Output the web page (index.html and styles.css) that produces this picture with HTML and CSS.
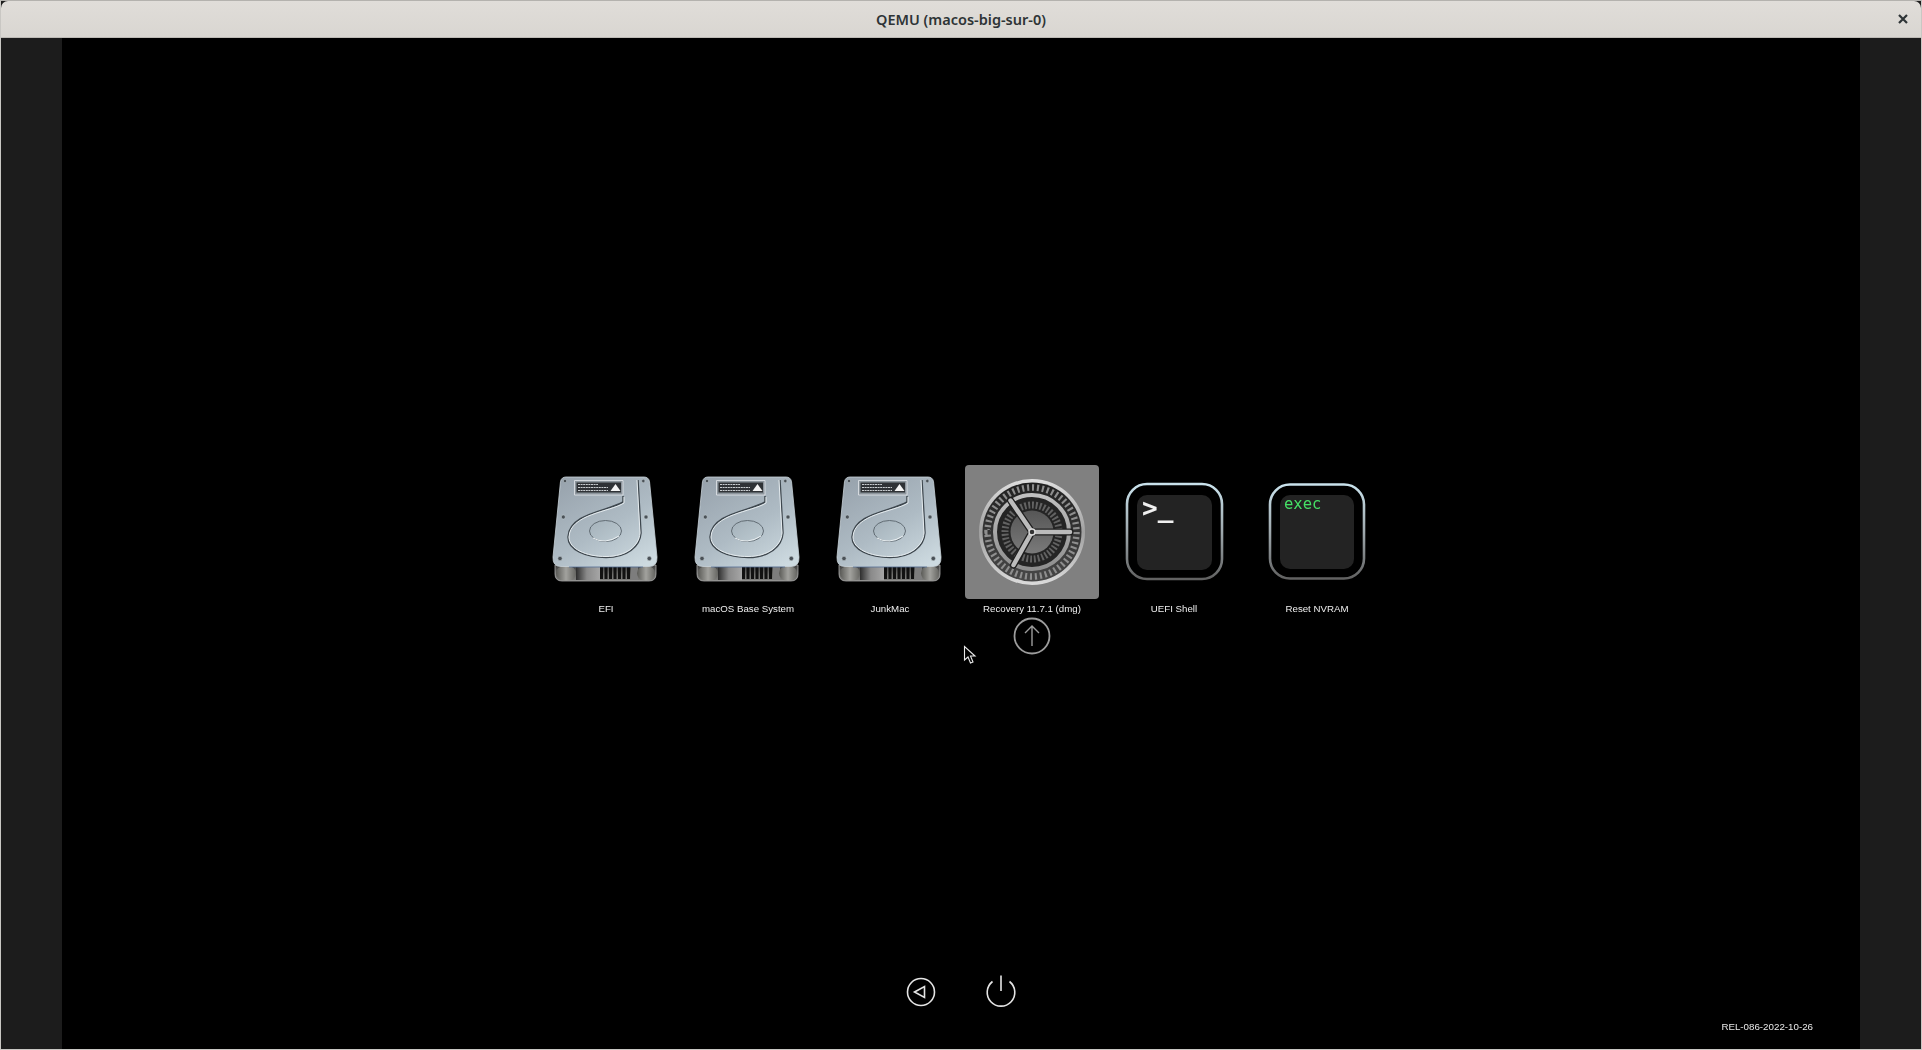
FILE: index.html
```html
<!DOCTYPE html>
<html lang="en">
<head>
<meta charset="utf-8">
<title>QEMU (macos-big-sur-0)</title>
<link rel="stylesheet" href="styles.css">
</head>
<body>
<div class="window">
  <header class="titlebar">
    <span class="title">QEMU (macos-big-sur-0)</span>
    <svg class="close" width="12" height="12" viewBox="0 0 12 12"><path d="M2 2 10 10M10 2 2 10"/></svg>
  </header>
  <div class="screen">
    <div class="side"></div>
    <main class="boot">
      <div class="row">
        <div class="item">
          <div class="tile">
            <svg class="icon" width="134" height="134" viewBox="0 0 134 134">
              <defs>
                <linearGradient id="plate" x1="0.15" y1="0" x2="0.85" y2="1">
                  <stop offset="0" stop-color="#98a3ad"/><stop offset="0.55" stop-color="#aebbc4"/><stop offset="1" stop-color="#cddae0"/>
                </linearGradient>
                <linearGradient id="hub" x1="0" y1="0" x2="1" y2="1">
                  <stop offset="0" stop-color="#a4b1ba"/><stop offset="1" stop-color="#bccad1"/>
                </linearGradient>
                <linearGradient id="base" x1="0" y1="0" x2="0" y2="1">
                  <stop offset="0" stop-color="#3c3c3c"/><stop offset="0.6" stop-color="#6f6f6d"/><stop offset="1" stop-color="#7e7e7c"/>
                </linearGradient>
                <linearGradient id="foot" x1="0" y1="0" x2="1" y2="0">
                  <stop offset="0" stop-color="#5a5a56"/><stop offset="0.5" stop-color="#a2a29e"/><stop offset="1" stop-color="#666662"/>
                </linearGradient>
                <linearGradient id="mid" x1="0" y1="0" x2="1" y2="0">
                  <stop offset="0" stop-color="#2e2e2e"/><stop offset="0.45" stop-color="#8a8a8a"/><stop offset="1" stop-color="#a6a6a6"/>
                </linearGradient>
              </defs>
              <g id="disk">
                <path d="M16 100H117V109Q117 116 110 116H23Q16 116 16 109Z" fill="url(#base)" stroke="#bdbdbd" stroke-width="0.7"/>
                <path d="M37 102H61V115H37Z" fill="url(#mid)"/>
                <path d="M92 102H99V115H92Z" fill="#7d7d7d"/>
                <rect x="17" y="101" width="20" height="14.500" rx="8" fill="url(#foot)"/>
                <rect x="98" y="101" width="18" height="14.500" rx="8" fill="url(#foot)"/>
                <path class="grill" d="M62.500 102V114M67 102V114M71.500 102V114M76 102V114M80.500 102V114M85 102V114M89.500 102V114"/>
                <path d="M27 12H105Q109.500 12 110.500 16.500L118 92Q118.500 101.500 110 101.500H22Q13.500 101.500 14 92L21.500 16.500Q22.500 12 27 12Z" fill="url(#plate)" stroke="#c9d3d9" stroke-width="0.8"/>
                <path d="M30 102H104" stroke="#4a6a9a" stroke-width="0.7"/>
                <path d="M35.500 15.500H84V30H35.500Z" fill="#8d969d" stroke="#e4e9ec" stroke-width="0.8"/>
                <path d="M37.500 17.500H82V27.500H37.500Z" fill="#2f3236"/>
                <path class="print" d="M39 19.500H59M39 22.500H69M39 25.500H69"/>
                <path d="M71.500 26 76.500 19 81.500 26Z" fill="#f4f4f4"/>
                <path class="groove" d="M84 31V37C70 46 30 48 29 72 29 85 47 92.500 67 92.500 88 92.500 101 82 102 68L99 15"/>
                <path class="groove-hi" d="M85 32V38C71 47 31 49 30 72 30 84 47 91.500 67 91.500 87 91.500 100 81 101 68L98 15"/>
                <ellipse cx="66.500" cy="66" rx="16" ry="10.500" fill="url(#hub)" stroke="#59636b" stroke-width="0.9"/>
                <path d="M54 73Q66 80 80 71" fill="none" stroke="#eef3f5" stroke-width="1"/>
                <g class="screws">
                  <circle cx="26" cy="16" r="1.700"/><circle cx="104.300" cy="16" r="1.700"/>
                  <circle cx="24.300" cy="52" r="2"/><circle cx="107" cy="52" r="2"/>
                  <circle cx="21" cy="93.500" r="2.200"/><circle cx="110.300" cy="93.500" r="2.200"/>
                </g>
              </g>
            </svg>
          </div>
          <div class="label">EFI</div>
        </div>
        <div class="item">
          <div class="tile"><svg class="icon" width="134" height="134" viewBox="0 0 134 134"><use href="#disk"/></svg></div>
          <div class="label">macOS Base System</div>
        </div>
        <div class="item">
          <div class="tile"><svg class="icon" width="134" height="134" viewBox="0 0 134 134"><use href="#disk"/></svg></div>
          <div class="label">JunkMac</div>
        </div>
        <div class="item">
          <div class="tile selected">
            <svg class="icon gear" width="134" height="134" viewBox="0 0 134 134">
              <defs>
                <linearGradient id="rim" x1="0" y1="0" x2="0" y2="1">
                  <stop offset="0" stop-color="#e0e0e0"/><stop offset="0.5" stop-color="#a0a0a0"/><stop offset="1" stop-color="#dcdcdc"/>
                </linearGradient>
                <linearGradient id="well" x1="0" y1="0" x2="0" y2="1">
                  <stop offset="0" stop-color="#202020"/><stop offset="1" stop-color="#484848"/>
                </linearGradient>
                <linearGradient id="ring" x1="0" y1="0" x2="0" y2="1">
                  <stop offset="0" stop-color="#c0c0c0"/><stop offset="1" stop-color="#8e8e8e"/>
                </linearGradient>
                <linearGradient id="core" x1="0" y1="0" x2="0" y2="1">
                  <stop offset="0" stop-color="#565656"/><stop offset="1" stop-color="#7a7a7a"/>
                </linearGradient>
              </defs>
              <circle cx="67" cy="67" r="53" fill="url(#rim)"/>
              <circle cx="67" cy="67" r="49.500" fill="url(#well)"/>
              <circle class="teeth-out" cx="67" cy="67" r="44.500" pathLength="56"/>
              <circle cx="67" cy="67" r="37" fill="#242424" stroke="url(#ring)" stroke-width="4"/>
              <circle class="teeth-in" cx="67" cy="67" r="27" pathLength="44"/>
              <circle cx="67" cy="67" r="21.500" fill="url(#core)"/>
              <path class="spokes-shade" d="M67 67 105 67M67 67 45.500 35.500M67 67 48.500 100"/>
              <path class="spokes" d="M67 67 105 67M67 67 45.500 35.500M67 67 48.500 100"/>
              <circle cx="67" cy="67" r="3" fill="#333" stroke="#dcdcdc" stroke-width="1.400"/>
            </svg>
          </div>
          <div class="label">Recovery 11.7.1 (dmg)</div>
          <svg class="arrow" width="38" height="38" viewBox="0 0 38 38"><circle cx="19" cy="19" r="17.500"/><path d="M19 29V9M12 16 19 9 26 16"/></svg>
        </div>
        <div class="item">
          <div class="tile">
            <svg class="icon" width="134" height="134" viewBox="0 0 134 134">
              <defs>
                <linearGradient id="bezel" x1="0" y1="0" x2="0" y2="1">
                  <stop offset="0" stop-color="#c9e2ec"/><stop offset="0.5" stop-color="#9fa9ae"/><stop offset="1" stop-color="#626262"/>
                </linearGradient>
              </defs>
              <rect x="20" y="19" width="95" height="95" rx="20" class="bezel"/>
              <rect x="30" y="30" width="75" height="75" rx="10" class="pane"/>
              <text x="35" y="52" class="prompt">&gt;_</text>
            </svg>
          </div>
          <div class="label">UEFI Shell</div>
        </div>
        <div class="item item-last">
          <div class="tile">
            <svg class="icon" width="134" height="134" viewBox="0 0 134 134">
              <rect x="20" y="19.500" width="94" height="94" rx="20" class="bezel"/>
              <rect x="30" y="30" width="74" height="74" rx="10" class="pane"/>
              <text x="34" y="44" class="exec">exec</text>
            </svg>
          </div>
          <div class="label">Reset NVRAM</div>
        </div>
      </div>
      <div class="controls">
        <svg class="ctrl" width="40" height="40" viewBox="0 0 40 40"><circle cx="20" cy="20" r="13.500"/><path d="M13.500 20 23.500 14.500V25.500Z"/></svg>
        <svg class="ctrl" width="40" height="40" viewBox="0 0 40 40"><path d="M11.500 9.500A13.800 13.800 0 1 0 28.500 9.500M20 3.500V19"/></svg>
      </div>
      <div class="version">REL-086-2022-10-26</div>
      <svg class="cursor" width="14" height="20" viewBox="0 0 14 20"><path d="M1.500 1.500V15L5 12 7.500 18 10 17 7.500 11H12Z"/></svg>
    </main>
    <div class="side"></div>
  </div>
</div>
</body>
</html>
```
FILE: styles.css
```css
* { box-sizing: border-box; }
html, body { margin: 0; height: 100%; background: #1c1c1c; overflow: hidden; }

.window {
  display: flex;
  flex-direction: column;
  height: 100vh;
  background: #1c1c1c;
  border: 1px solid #c9c7c3;
  border-top-color: #b4b2ae;
}

.titlebar {
  position: relative;
  flex: 0 0 37px;
  display: flex;
  align-items: center;
  justify-content: center;
  background: linear-gradient(#e0ddd9, #d9d6d1);
  border-bottom: 1px solid #bdbab5;
  border-radius: 7px 7px 0 0;
}

.title {
  font: 600 14.5px "Noto Sans", "Open Sans", sans-serif;
  color: #2e3436;
}

.close { position: absolute; right: 12px; top: 12px; }
.close path { fill: none; stroke: #2e3436; stroke-width: 2.2; }

.screen { flex: 1; display: flex; min-height: 0; }
.side { flex: 0 0 61px; background: #1c1c1c; }

.boot {
  position: relative;
  flex: 1;
  display: flex;
  flex-direction: column;
  align-items: center;
  padding-top: 427px;
  background: #000;
}

.row { display: flex; align-items: flex-start; }
.item { width: 142px; display: flex; flex-direction: column; align-items: center; }
.item-last { margin: 0 -1px 0 1px; }
.tile { width: 134px; height: 134px; border-radius: 4px; }
.tile.selected { background: #808080; }
.icon { display: block; filter: blur(0.45px); }
.gear { filter: blur(0.6px); }

.label {
  margin-top: 1px;
  font: 9.7px/18px "Liberation Sans", Arial, sans-serif;
  color: #eee;
  white-space: nowrap;
  filter: blur(0.25px);
}

.arrow { display: block; margin-top: -1px; filter: blur(0.3px); }
.arrow circle, .arrow path { fill: none; stroke: #9c9c9c; stroke-width: 1.8; }
.arrow path { stroke-width: 1.4; }

.grill { fill: none; stroke: #111; stroke-width: 3; }
.print { fill: none; stroke: #c9cdd0; stroke-width: 1; stroke-dasharray: 2 0.6; }
.groove { fill: none; stroke: #3e474e; stroke-width: 1.5; }
.groove-hi { fill: none; stroke: #e6ecef; stroke-width: 1; }
.screws circle { fill: #4a5157; stroke: #c5ced3; stroke-width: 0.5; }

.teeth-out { fill: none; stroke: #8e8e8e; stroke-width: 6.500; stroke-dasharray: 0.42 0.58; }
.teeth-in { fill: none; stroke: #626262; stroke-width: 7; stroke-dasharray: 0.5 0.5; }
.spokes-shade { fill: none; stroke: #1e1e1e; stroke-width: 7; stroke-linecap: round; }
.spokes { fill: none; stroke: #bcbcbc; stroke-width: 4.500; stroke-linecap: round; }

.bezel { fill: #000; stroke: url(#bezel); stroke-width: 2.600; }
.pane { fill: #232323; }
.prompt { font: bold 26px "DejaVu Sans Mono", monospace; fill: #f0f0f0; }
.exec { font: 15.5px "DejaVu Sans Mono", monospace; fill: #45e065; }

.controls { margin-top: auto; display: flex; gap: 40px; }
.ctrl { display: block; filter: blur(0.2px); }
.ctrl circle, .ctrl path { fill: none; stroke: #e4e4e4; stroke-width: 1.6; }

.version {
  align-self: flex-end;
  margin: 8px 47px 15px 0;
  font: 9.75px/14px "Liberation Sans", Arial, sans-serif;
  color: #e8e8e8;
  filter: blur(0.25px);
}

.cursor { position: absolute; left: 901px; top: 607px; }
.cursor path { fill: #000; stroke: #e8e8e8; stroke-width: 1.1; }
```
